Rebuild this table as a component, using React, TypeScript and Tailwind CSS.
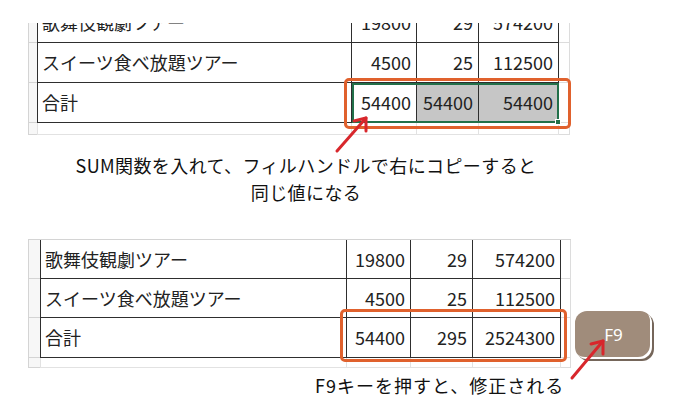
const cellFont = { fontFamily: '"Noto Sans CJK JP", "Noto Sans", sans-serif' };

type RowProps = {
  cells: string[];
  widths: number[];
  gutterL: string;
  gutterR: string;
  h: string;
  shaded?: boolean;
  select?: boolean;
};

const widthClass: Record<number, string> = {
  315: "w-[315px]",
  65: "w-[65px]",
  62: "w-[62px]",
  80: "w-[80px]",
  307: "w-[307px]",
  64: "w-[64px]",
  88: "w-[88px]",
};

const Row = ({ cells, widths, gutterL, gutterR, h, shaded, select }: RowProps) => (
  <div className={`flex ${h}`}>
    <div className={`${gutterL} shrink-0 border-l border-b border-[#d4d4d4] bg-[#f7f7f7]`} />
    <div className="relative flex">
      {cells.map((c, i) => (
        <div
          key={i}
          className={`${widthClass[widths[i]]} shrink-0 flex items-center border-r border-b border-[#2e2e2e] text-[18px] text-[#222] ${
            i === 0 ? "border-l justify-start pl-[4px]" : "justify-end pr-[5px]"
          } ${shaded && i >= 2 ? "bg-[#c6c6c6]" : "bg-white"}`}
        >
          {c}
        </div>
      ))}
      {select && (
        <div className="absolute top-0 bottom-0 left-[315px] right-0 border-2 border-[#22704a]">
          <div className="absolute -right-[4px] -bottom-[4px] w-[6px] h-[6px] bg-[#22704a] border border-white" />
        </div>
      )}
    </div>
    <div className={`${gutterR} shrink-0 border-r border-b border-[#dcdcdc]`} />
  </div>
);

const EmptyRow = ({ widths, gutterL, gutterR, h }: { widths: number[]; gutterL: string; gutterR: string; h: string }) => (
  <div className={`flex ${h}`}>
    <div className={`${gutterL} shrink-0 border-l border-b border-[#d4d4d4] bg-[#f7f7f7]`} />
    {widths.map((w, i) => (
      <div key={i} className={`${widthClass[w]} shrink-0 border-r border-b border-[#e2e2e2] ${i === 0 ? "border-l" : ""}`} />
    ))}
    <div className={`${gutterR} shrink-0 border-r border-b border-[#dcdcdc]`} />
  </div>
);

export default function App() {
  const topW = [315, 65, 62, 80];
  const botW = [307, 64, 62, 88];

  return (
    <div className="relative w-[677px] h-[415px] overflow-hidden bg-white" style={cellFont}>
      {/* upper screenshot */}
      <div className="ml-[28px] mt-[23px] w-[543px] h-[112px] overflow-hidden">
        <div className="-mt-[20px]">
          <Row cells={["歌舞伎観劇ツアー", "19800", "29", "574200"]} widths={topW} gutterL="w-[9px]" gutterR="w-[11px]" h="h-[40px]" />
          <Row cells={["スイーツ食べ放題ツアー", "4500", "25", "112500"]} widths={topW} gutterL="w-[9px]" gutterR="w-[11px]" h="h-[40px]" />
          <Row cells={["合計", "54400", "54400", "54400"]} widths={topW} gutterL="w-[9px]" gutterR="w-[11px]" h="h-[40px]" shaded select />
          <EmptyRow widths={topW} gutterL="w-[9px]" gutterR="w-[11px]" h="h-[12px]" />
        </div>
      </div>

      <div className="w-[612px] mt-[17px] text-center text-[18px] leading-[27px] tracking-[0.4px] text-[#111]">
        <p>SUM関数を入れて、フィルハンドルで右にコピーすると</p>
        <p>同じ値になる</p>
      </div>

      {/* lower screenshot */}
      <div className="flex items-start mt-[33px] ml-[28px]">
        <div className="w-[543px] border-t border-[#d4d4d4]">
          <Row cells={["歌舞伎観劇ツアー", "19800", "29", "574200"]} widths={botW} gutterL="w-[12px]" gutterR="w-[10px]" h="h-[39px]" />
          <Row cells={["スイーツ食べ放題ツアー", "4500", "25", "112500"]} widths={botW} gutterL="w-[12px]" gutterR="w-[10px]" h="h-[39px]" />
          <Row cells={["合計", "54400", "295", "2524300"]} widths={botW} gutterL="w-[12px]" gutterR="w-[10px]" h="h-[40px]" />
          <EmptyRow widths={botW} gutterL="w-[12px]" gutterR="w-[10px]" h="h-[10px]" />
        </div>
        <div className="ml-[4px] mt-[72px] w-[77px] h-[48px] rounded-[12px] bg-[#a08c7b] shadow-[inset_-2px_-2px_0_#ffffff,2px_2px_0_#75665a] flex items-center justify-center text-white text-[17px]" style={{ fontFamily: '"Noto Sans", sans-serif' }}>
          F9
        </div>
      </div>

      <p className="ml-[315px] mt-[4px] text-[18px] leading-[27px] tracking-[1px] text-[#111]">F9キーを押すと、修正される</p>

      {/* highlight frames */}
      <div className="absolute left-[344px] top-[78px] w-[227px] h-[51px] border-[3px] border-[#e0612d] rounded-[5px]" />
      <div className="absolute left-[340px] top-[309px] w-[227px] h-[53px] border-[3px] border-[#e0612d] rounded-[5px]" />

      {/* arrows */}
      <svg className="absolute left-0 top-0" width="677" height="415" viewBox="0 0 677 415" fill="none">
        <g stroke="#d8272c" strokeWidth="3" strokeLinecap="round" strokeLinejoin="round">
          <path d="M337 151 L366 118" />
          <path d="M354 121 L366 118 L366 131" />
          <path d="M572 378 L603 341" />
          <path d="M591 344 L603 341 L603 354" />
        </g>
      </svg>
    </div>
  );
}
